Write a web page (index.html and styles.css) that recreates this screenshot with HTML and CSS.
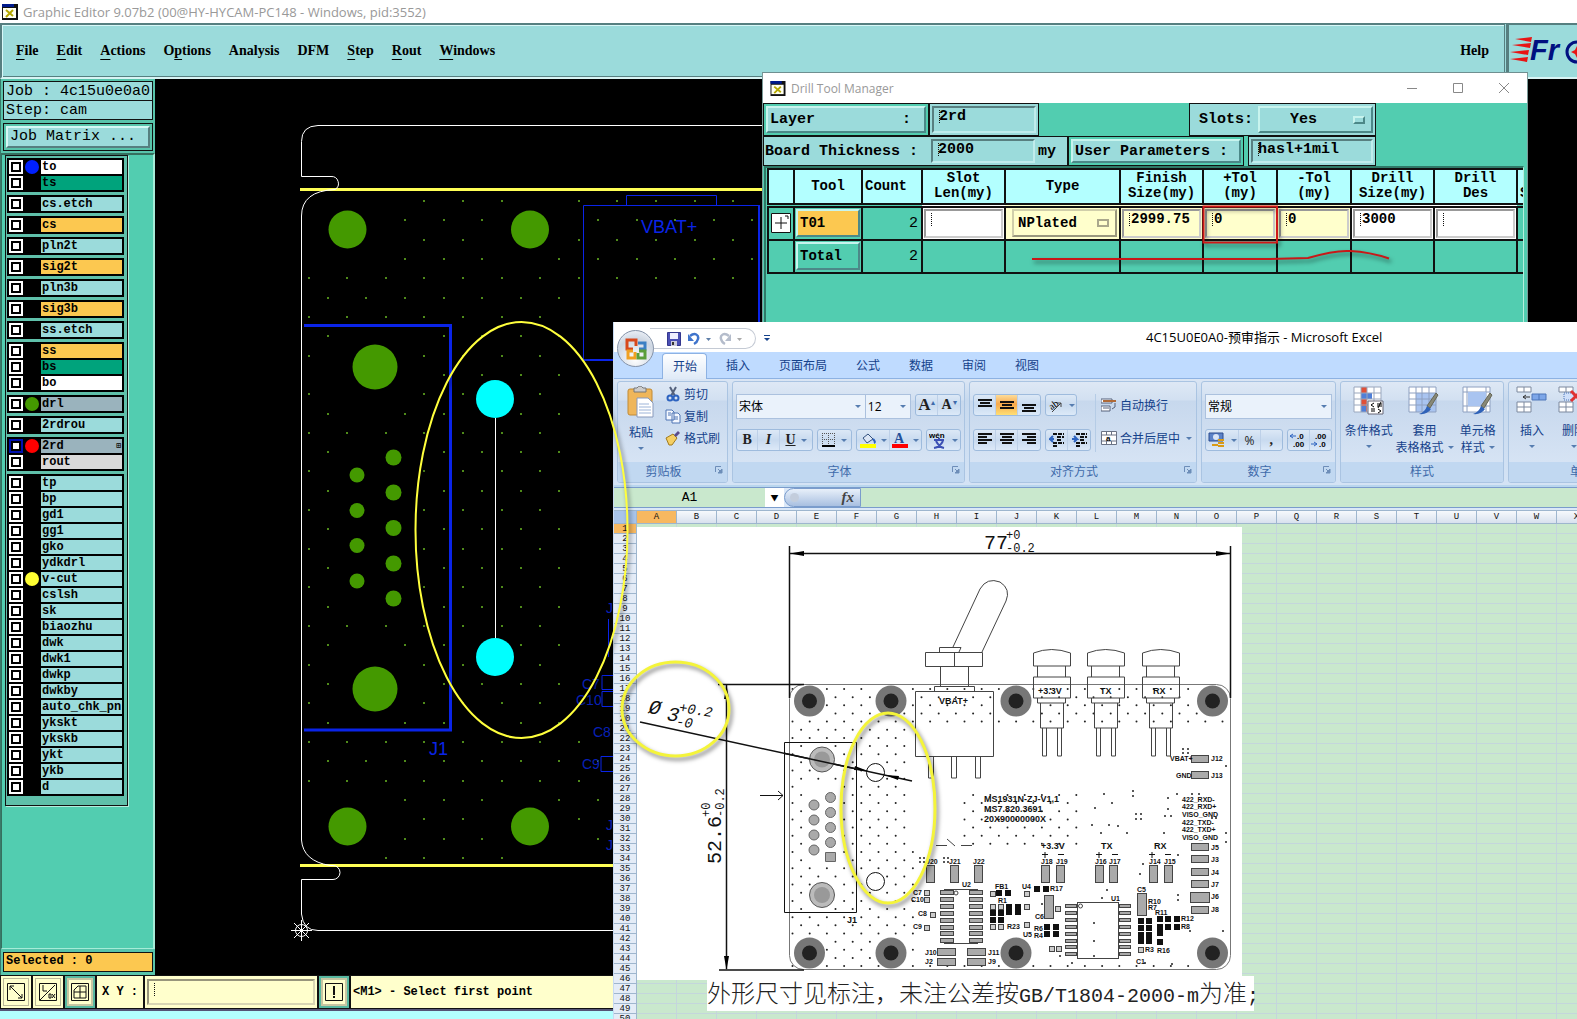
FILE: index.html
```html
<!DOCTYPE html>
<html lang="zh-CN">
<head>
<meta charset="utf-8">
<title>Graphic Editor</title>
<link rel="stylesheet" href="styles.css">
</head>
<body>
<svg class="defs" width="0" height="0" aria-hidden="true">
  <symbol id="x-app" viewBox="0 0 16 16"><path d="M0 0h16v16H0z" fill="#111"/><path d="M1 4h13v10H1z" fill="#fffff0"/><path d="M0 0h12v3H0z" fill="#001a8c"/><path d="M4 6l7 6M11 6l-7 7" stroke="#b5a800" stroke-width="2"/></symbol>
  <symbol id="launcher" viewBox="0 0 8 8"><path d="M.5 6V.5H6" fill="none" stroke="#6d8db8"/><path d="M3 3l2 2M7 3v4H3z" stroke="#6d8db8" fill="#6d8db8"/></symbol>
</svg>

<div class="app">
  <header class="titlebar"><svg class="appicon"><use href="#x-app"/></svg><span>Graphic Editor 9.07b2 (00@HY-HYCAM-PC148 - Windows, pid:3552)</span></header>
  <div class="menurow">
    <nav class="menubar">
      <button><u>F</u>ile</button><button><u>E</u>dit</button><button><u>A</u>ctions</button><button>O<u>p</u>tions</button><button>Analysis</button><button>DFM</button><button><u>S</u>tep</button><button><u>R</u>out</button><button><u>W</u>indows</button>
      <button class="help">Help</button>
    </nav>
    <div class="logo">
      <svg width="80" height="48"><g fill="#e81414"><path d="M6 14l17-2-1 5zM3 20l19-2-1 5zM1 27l19-2-1 5zM1 34l18-2-1 5z"/></g><text x="21" y="35" class="logotext">Fr</text><circle cx="68" cy="27" r="10" fill="none" stroke="#001080" stroke-width="3"/><path d="M68 21l2 4 4 2-4 2-2 4-2-4-4-2 4-2z" fill="#e81414"/></svg>
    </div>
  </div>
  <main class="work">
    <aside class="side">
      <div class="jobbox">Job : 4c15u0e0a0</div>
      <div class="jobbox">Step: cam</div>
      <div class="matrix"><button>Job Matrix ...</button></div>
      <div class="layerpane"><div class="layers" id="layers"></div></div>
      <output class="selected">Selected : 0</output>
    </aside>
    <svg class="canvas" role="img" aria-label="PCB view"><g transform="translate(-155 -79)">
      <g id="vias" fill="#4f8a1a"></g>
      <g fill="none" stroke="#0a24e8"><path stroke-width="3" d="M304 325.5H450.5V730H304"/><path d="M583.5 360V205.5H759M626.5 205V195.5H716.5V205"/><path stroke-width="2" d="M759 205V360H583"/><path d="M614 675.500H602V689.500H614M614 691.500H602V706.500H614M614 756.500H601V771.500H614M608.500 619v38"/></g>
      <g fill="#0a24e8" class="silk"><text x="641" y="233">VBAT+</text><text x="429" y="755">J1</text></g>
      <g fill="#0820b8" class="silk small"><text x="582" y="689">C7</text><text x="576" y="705">C10</text><text x="593" y="737">C8</text><text x="582" y="769">C9</text><text x="606" y="613">J</text><text x="606" y="830">J</text><text x="606" y="850">J</text></g>
      <g fill="#449900"><circle cx="347.500" cy="229.500" r="19"/><circle cx="530" cy="229.500" r="19"/><circle cx="375" cy="367" r="22.500"/><circle cx="375" cy="689" r="22.500"/><circle cx="347.500" cy="826.500" r="19"/><circle cx="530" cy="826.500" r="19"/>
      <circle cx="393.500" cy="457.500" r="8"/><circle cx="393.500" cy="492.500" r="8"/><circle cx="393.500" cy="528" r="8"/><circle cx="393.500" cy="563.500" r="8"/><circle cx="393.500" cy="598.500" r="8"/><circle cx="357" cy="475" r="7.500"/><circle cx="357" cy="510.500" r="7.500"/><circle cx="357" cy="545.500" r="7.500"/><circle cx="357" cy="581" r="7.500"/></g>
      <path d="M300 189.500H770M300 865.500H620" stroke="#ffff55" stroke-width="3"/>
      <path fill="none" stroke="#fff" d="M780 125.500H318Q301.500 126 301.500 141.500V176.500H331a7 7 0 0 1 4 13Q301.500 191 301.500 216V840Q303 861 330 865.500H333a7 7 0 0 1 0 14H301.500V914Q303 930.500 318 930.500H620"/>
      <g fill="none" stroke="#fff"><circle cx="301.500" cy="930.500" r="6"/><path d="M291 930.500h21M301.500 920v21M294 923l15 15M309 923l-15 15"/></g>
      <path d="M495.500 418V640" stroke="#fff"/><g fill="#0ff"><circle cx="495" cy="399" r="19"/><circle cx="495" cy="657" r="19"/></g>
    </g></svg>
  </main>
  <footer class="cmdbar">
    <button class="tool" aria-label="Zoom"><svg width="20" height="20"><path class="ln" d="M1.500 1.500h17v17h-17zM4 4l12 12M4 8V4h4M12 16h4v-4"/></svg></button>
    <button class="tool" aria-label="Angle"><svg width="20" height="20"><path class="ln" d="M1.500 1.500h17v17h-17zM2 18L17 3M5 3v6h4M11 12v4h2v-4zM14 12l3 4M17 12l-3 4"/></svg></button>
    <button class="tool on" aria-label="Grid"><svg width="20" height="20"><path class="ln" d="M1.500 1.500h17v17h-17zM4 8l4-4h8v12H4zM10 4v12M4 10h12"/></svg></button>
    <label class="xy" for="xy">X Y :</label>
    <span class="xyfield"><input id="xy" type="text" class="caret"></span>
    <button class="tool on" aria-label="Info"><svg width="20" height="20"><path class="ln strong" d="M1.500 1.500h17v17h-17z"/><path class="ln2" d="M10 4v9M10 14v2"/></svg></button>
    <output class="message">&lt;M1&gt; - Select first point</output>
  </footer>
  <div class="status"></div>
</div>

<section class="drill" aria-label="Drill Tool Manager">
  <header class="drilltitle"><svg class="appicon"><use href="#x-app"/></svg><span>Drill Tool Manager</span>
    <button class="push" aria-label="Minimize"><svg width="12" height="12"><path d="M1 6.500h10"/></svg></button><button aria-label="Maximize"><svg width="12" height="12"><path d="M1.500 1.500h9v9h-9z"/></svg></button><button aria-label="Close"><svg width="12" height="12"><path d="M1 1l10 10M11 1L1 11"/></svg></button></header>
  <div class="prow">
    <div class="cell"><button class="raised layerbtn"><span>Layer</span><span>:</span></button></div>
    <div class="cell blue"><input class="sunk caret" value="2rd" aria-label="Layer"></div>
    <div class="cell blue slots"><label for="slots">Slots:</label><span class="pick raised"><select id="slots"><option>Yes</option></select></span></div>
  </div>
  <div class="prow low">
    <div class="cell blue thick"><label for="bt">Board Thickness :</label><input id="bt" class="sunk caret" value="2000"><span>my</span></div>
    <div class="cell"><button class="raised">User Parameters :</button></div>
    <div class="cell blue user"><input class="sunk caret" value="hasl+1mil" aria-label="User Parameters"></div>
  </div>
  <div class="tablebox">
  <table>
    <colgroup><col class="w26"><col class="w68"><col class="w60"><col class="w83"><col class="w115"><col class="w83"><col class="w74"><col class="w74"><col class="w83"><col class="w83"><col class="w26"></colgroup>
    <thead><tr><th></th><th>Tool</th><th class="left">Count</th><th>Slot<br>Len(my)</th><th>Type</th><th>Finish<br>Size(my)</th><th>+Tol<br>(my)</th><th>-Tol<br>(my)</th><th>Drill<br>Size(my)</th><th>Drill<br>Des</th><th class="left"><br>S</th></tr></thead>
    <tbody>
    <tr><td><button class="plus" aria-label="Expand"><svg width="20" height="20"><path class="ln" d="M.5 .5h19v19H.5zM4 10h12M10 4v12M14 3h3v3"/></svg></button></td><td><button class="raised gold">T01</button></td><td class="num">2</td><td class="white"><input class="sunk caret" aria-label="Slot length"></td><td class="cream"><span class="pick flat"><select aria-label="Type"><option>NPlated</option></select></span></td><td class="cream"><input class="sunk caret" value="2999.75" aria-label="Finish size"></td><td class="cream"><input class="sunk caret" value="0" aria-label="+Tol"></td><td class="cream"><input class="sunk caret" value="0" aria-label="-Tol"></td><td class="white"><input class="sunk caret" value="3000" aria-label="Drill size"></td><td class="white"><input class="sunk caret" aria-label="Drill des"></td><td></td></tr>
    <tr><td></td><td><button class="raised teal">Total</button></td><td class="num">2</td><td></td><td></td><td></td><td></td><td></td><td></td><td></td><td></td></tr>
    </tbody>
  </table></div>
</section>

<section class="excel" aria-label="Microsoft Excel">
  <header class="xtitle">
    <div class="qat">
      <button aria-label="保存"><svg width="14" height="14"><path d="M.5 .5h13v13H.5z" fill="#4a4fb4" stroke="#34378e"/><path d="M3 1h8v6H3z" fill="#eef"/><path d="M4 9h6v5H4z" fill="#ccd"/><path d="M5 10h2v3H5z" fill="#333"/></svg></button>
      <button aria-label="撤消"><svg width="24" height="14"><path d="M2 4c5-4 9-1 8 3-.5 2-2 4-4 5" fill="none" stroke="#3f74cc" stroke-width="2.500"/><path d="M0 2v7h6z" fill="#3f74cc"/><path d="M18 6h5l-2.500 3z" fill="#5e7ea8"/></svg></button>
      <button aria-label="恢复"><svg width="24" height="14"><path d="M10 4C5 0 1 3 2 7c.5 2 2 4 4 5" fill="none" stroke="#b4bccb" stroke-width="2.500"/><path d="M12 2v7H6z" fill="#b4bccb"/><path d="M18 6h5l-2.500 3z" fill="#aaa"/></svg></button>
    </div>
    <svg class="more" width="6" height="8"><path d="M0 1.500h6" stroke="#15428b"/><path d="M0 4h6L3 7z" fill="#15428b"/></svg>
    <h1>4C15U0E0A0-预审指示 - Microsoft Excel</h1>
  </header>
  <nav class="tabs"><button class="active">开始</button><button>插入</button><button>页面布局</button><button>公式</button><button>数据</button><button>审阅</button><button>视图</button></nav>
  <button class="orb" aria-label="Office"><svg width="24" height="24" fill="none" stroke-width="3"><path d="M12 9V3H3v9h6" stroke="#d8481c"/><path d="M14 6h7v6h-6" stroke="#3a7fc4"/><path d="M9 14H4v7h7v-6" stroke="#f0a020"/><path d="M15 14h6v7h-7v-5" stroke="#5a9e3a"/></svg></button>
  <div class="ribbon">
    <section class="group g-clip"><div class="gbody">
      <button class="big"><svg width="30" height="32"><rect x="2" y="3" width="24" height="26" rx="2" fill="#efb65a" stroke="#c18a35"/><path d="M8 2h3q3-4 6 0h3v4H8z" fill="#ccc" stroke="#777"/><path d="M11 12h11l5 5v14H11z" fill="#fff" stroke="#8899bb"/><path d="M13 18h10M13 21h12M13 24h12M13 27h12" stroke="#9db4d8"/></svg><span>粘贴</span><i class="dd"></i></button>
      <div class="stack">
        <button><svg width="16" height="16"><path d="M5 1l5 9M11 1L6 10" stroke="#54617c" stroke-width="2"/><circle cx="5" cy="12" r="2.500" fill="none" stroke="#2d63c0" stroke-width="2"/><circle cx="11" cy="12" r="2.500" fill="none" stroke="#2d63c0" stroke-width="2"/></svg>剪切</button>
        <button><svg width="16" height="16"><path d="M1 2h6l2 2v8H1zM7 5h6l2 2v8H7z" fill="#f4f8ff" stroke="#4e74b4"/><path d="M3 5h3M3 7h3M9 9h4M9 11h4" stroke="#4e74b4"/></svg>复制</button>
        <button><svg width="16" height="16"><path d="M1 8l7-4 4 4-5 7H4z" fill="#f5cf63" stroke="#a17a1c"/><path d="M9 5l4-4 2 2-4 4z" fill="#5a4c8c"/></svg>格式刷</button>
      </div></div><footer>剪贴板<svg class="la"><use href="#launcher"/></svg></footer></section>
    <section class="group g-font"><div class="gbody col">
      <div class="line"><span class="combo fname"><select aria-label="字体"><option>宋体</option></select></span><span class="combo fsize"><select aria-label="字号"><option>12</option></select></span><span class="bar m4"><button class="w22"><b class="t18">A</b><sup>▴</sup></button><button class="w22"><b class="t14">A</b><sup>▾</sup></button></span></div>
      <div class="line"><span class="bar"><button class="w22"><b>B</b></button><button class="w22"><b><em>I</em></b></button><button class="w34"><b><u>U</u></b><i class="dd"></i></button></span><span class="bar"><button class="w34"><svg width="14" height="14"><path d="M.5 0v13M6.500 0v13M12.500 0v13M0 .5h13M0 6.500h13" stroke="#555" stroke-dasharray="1 1"/><path d="M0 13h13" stroke="#000" stroke-width="2"/></svg><i class="dd"></i></button></span><span class="bar"><button class="w34"><svg width="16" height="16"><path d="M3 6l5-4 5 5-6 4z" fill="#dce6f5" stroke="#33517e"/><path d="M13 7q3 3 1 4" stroke="#2b62c0" stroke-width="2" fill="none"/><path d="M0 12h16v4H0z" fill="#ff0"/></svg><i class="dd"></i></button><button class="w32"><svg width="16" height="16"><text x="2" y="11" class="fa">A</text><path d="M0 12h16v4H0z" fill="red"/></svg><i class="dd"></i></button></span><span class="bar"><button class="w34"><svg width="18" height="18"><text x="0" y="7" class="wen">wén</text><path d="M5 9h10M10 7v2M7 10q3 6 8 7M14 10q-3 6-9 7" stroke="#3c50b4" stroke-width="2" fill="none"/></svg><i class="dd"></i></button></span></div>
      </div><footer>字体<svg class="la"><use href="#launcher"/></svg></footer></section>
    <section class="group g-align"><div class="gbody"><div class="gcol">
      <div class="line"><span class="bar"><button class="w22"><svg width="14" height="14"><path class="ln2" d="M0 2h14M2 5h10M0 8h14"/></svg></button><button class="w22 hot"><svg width="14" height="14"><path class="ln2" d="M0 4h14M2 7h10M0 10h14"/></svg></button><button class="w22"><svg width="14" height="14"><path class="ln2" d="M0 7h14M2 10h10M0 13h14"/></svg></button></span><span class="bar"><button class="w30"><svg width="17" height="17"><text x="2" y="11" class="ab" transform="rotate(-35 7 8)">ab</text><path d="M5 15L14 6M14 6v4M14 6h-4" stroke="#444"/></svg><i class="dd"></i></button></span></div>
      <div class="line"><span class="bar"><button class="w22"><svg width="14" height="14"><path class="ln2" d="M0 1h14M0 4h9M0 7h14M0 10h9"/></svg></button><button class="w22"><svg width="14" height="14"><path class="ln2" d="M0 1h14M2 4h10M0 7h14M2 10h10"/></svg></button><button class="w22"><svg width="14" height="14"><path class="ln2" d="M0 1h14M5 4h9M0 7h14M5 10h9"/></svg></button></span><span class="bar"><button class="w22"><svg width="15" height="14"><path class="ln2" d="M4 1h11M8 4h7M8 7h5M4 10h11M4 13h4" stroke-dasharray="4 1"/><path d="M5 6H1l3-3M1 6l3 3" stroke="#2d63c0" fill="none" stroke-width="2"/></svg></button><button class="w22"><svg width="15" height="14"><path class="ln2" d="M4 1h11M8 4h7M8 7h5M4 10h11M4 13h4" stroke-dasharray="4 1"/><path d="M0 6h5L2 3M5 6L2 9" stroke="#2d63c0" fill="none" stroke-width="2"/></svg></button></span></div></div>
      <div class="gcol wrapcol"><button><svg width="16" height="16"><path d="M0 2h11v4H0zM0 9h9v5H0z" fill="#fff" stroke="#55617a"/><path d="M2 4h13" stroke="#b06a36" stroke-width="2"/><path d="M2 11h6M14 6v4l-3 2" stroke="#55617a" fill="none"/></svg>自动换行</button><button><svg width="16" height="16"><path d="M.5 1.500h15v13H.5zM0 5h16M0 11h16M5.500 1v4M10.500 1v4M5.500 11v3M10.500 11v3" fill="#fff" stroke="#6a7385"/><text x="5" y="11" class="wen">a</text></svg>合并后居中<i class="dd"></i></button></div>
      </div><footer>对齐方式<svg class="la"><use href="#launcher"/></svg></footer></section>
    <section class="group g-num"><div class="gbody col">
      <div class="line"><span class="combo wide"><select aria-label="数字格式"><option>常规</option></select></span></div>
      <div class="line"><span class="bar"><button class="w34"><svg width="18" height="16"><path d="M1 1h14v8H1z" fill="#5b82c8" stroke="#2c4d8f"/><circle cx="8" cy="5" r="3" fill="#d8e4f8"/><path d="M10 8h6M10 11h6M4 13h6M10 14h6" stroke="#d99b17" stroke-width="2"/></svg><i class="dd"></i></button><button class="w22">%</button><button class="w22"><b>,</b></button></span><span class="bar"><button class="w22"><svg width="18" height="16"><path d="M7 4H1l3-2M1 4l3 2" stroke="#2d63c0" fill="none"/><text x="8" y="7" class="dec">.0</text><text x="4" y="15" class="dec">.00</text></svg></button><button class="w22"><svg width="18" height="16"><text x="4" y="7" class="dec">.00</text><path d="M0 12h6l-3-2M6 12l-3 2" stroke="#2d63c0" fill="none"/><text x="8" y="15" class="dec">.0</text></svg></button></span></div>
      </div><footer>数字<svg class="la"><use href="#launcher"/></svg></footer></section>
    <section class="group g-style"><div class="gbody">
      <button class="big wide1"><svg width="32" height="30"><path d="M1 1h27v25H1z" fill="#fff"/><path d="M8 1h6v25H8z" fill="#e05038"/><path d="M8 7h11v6H8zM8 20h5v6H8z" fill="#4f7fd8"/><path d="M1 1h27v25H1zM1 7h27M1 13h27M1 19h27M8 1v25M14 1v25M21 1v25" fill="none" stroke="#9aa7bd"/><path d="M15 15h15v13H15z" fill="#fff" stroke="#667"/><path d="M21 17l-3 2 3 2M18 23h4M18 25h4M24 18h5M24 20h5M28 16l-3 6M25 23l3 2-3 2" stroke="#000" fill="none"/></svg><span>条件格式</span><i class="dd"></i></button>
      <button class="big wide1"><svg width="32" height="30"><path d="M1 1h27v25H1z" fill="#fff"/><path d="M8 7h20v19H8z" fill="#a9c4f0"/><path d="M1 1h27v25H1zM1 7h27M1 13h27M1 19h27M8 1v25M14 1v25M21 1v25" fill="none" stroke="#8ea0c0"/><path d="M19 20L28 7l2 2-8 13z" fill="#887" stroke="#665"/><path d="M11 28q6-2 8-8l4 3q-4 6-12 5z" fill="#2f62b8"/></svg><span>套用</span><span>表格格式<i class="dd"></i></span></button>
      <button class="big"><svg width="32" height="30"><path d="M1 1h27v25H1z" fill="#fff" stroke="#8ea0c0"/><path d="M1 6h27M1 20h27M5 1v25M24 1v25" stroke="#8ea0c0"/><path d="M6 6h18v14H6z" fill="#a9c4f0"/><path d="M19 20L28 7l2 2-8 13z" fill="#887" stroke="#665"/><path d="M11 28q6-2 8-8l4 3q-4 6-12 5z" fill="#2f62b8"/></svg><span>单元格</span><span>样式<i class="dd"></i></span></button>
      </div><footer class="center">样式</footer></section>
    <section class="group g-cell"><div class="gbody">
      <button class="big"><svg width="32" height="30"><path d="M1 1h14v5H1zM1 16h14v10H1zM8 1v5M8 16v10M1 21h14" fill="#fff" stroke="#7d899e"/><path d="M16 8h14v6H16zM23 8v6" fill="#7da6e8" stroke="#4d74b8"/><path d="M14 11H7l3-2M7 11l3 2" stroke="#333" fill="none"/></svg><span>插入</span><i class="dd"></i></button>
      <button class="big"><svg width="32" height="30"><path d="M1 1h14v5H1zM1 16h14v10H1zM8 1v5M8 16v10M1 21h14" fill="#fff" stroke="#7d899e"/><path d="M6 7h10v7H6z" fill="#cfe0fa" stroke="#4d74b8" stroke-dasharray="1 1"/><path d="M13 5l10 10M23 5L13 15" stroke="#e03030" stroke-width="3"/></svg><span>删除</span><i class="dd"></i></button>
      </div><footer class="center">单元格</footer></section>
  </div>
  <div class="fbar"><input class="namebox" value="A1" aria-label="名称框"><button class="nd" aria-label="名称列表">▼</button><span class="fx"><i></i><em>fx</em></span><input class="formula" aria-label="编辑栏"></div>
  <div class="colheads" id="cols"><span class="corner"></span></div>
  <div class="sheet">
    <div class="rowheads" id="rows"></div>
    <div class="cells">
      <svg class="picture" width="605" height="453" role="img" aria-label="外形尺寸图"><g transform="translate(-637 -526)">
        <g id="pads" fill="#222"></g>
        <g fill="none" stroke="#777"><rect x="789.500" y="683.500" width="441" height="285" rx="14"/></g>
        <g fill="none" stroke="#111" stroke-width="1"><path d="M789.500 545V697M1230.500 545V697M789 552.500H1230M726.500 684V968M718 683.500H804M719 969H804" stroke-width="1.500"/><path d="M784.500 741.500h72v170h-72z"/><path d="M640 721L912 780" stroke-width="1.500"/><path d="M760 794.500h23M778 790l5 4.500-5 4.500"/><circle cx="875.500" cy="771.500" r="9"/><circle cx="875.500" cy="880.500" r="9"/></g>
        <path d="M790 552.500l14-2.500v5zM1230 552.500l-14-2.500v5zM726.500 684l-2.500 14h5zM726.500 969l-2.500-14h5zM868 770l-14-1 1-4zM885 774l14 1-1 4z"/>
        <g id="holes"></g>
        <g fill="#bbb" stroke="#555"><circle cx="822" cy="758.500" r="12.500"/><circle cx="822" cy="894" r="12.500"/></g>
        <g fill="#999"><circle cx="822" cy="758.500" r="8"/><circle cx="822" cy="894" r="8"/></g>
        <g fill="#aaa" stroke="#666"><circle cx="830.500" cy="796.500" r="5"/><circle cx="830.500" cy="811.500" r="5"/><circle cx="830.500" cy="826.500" r="5"/><circle cx="830.500" cy="841.500" r="5"/><path d="M825.500 851.500h10v9h-10z"/><circle cx="814" cy="804" r="5"/><circle cx="814" cy="819" r="5"/><circle cx="814" cy="834" r="5"/><circle cx="814" cy="849" r="5"/></g>
        <path d="M784 752.300L858 768.300" stroke="#111" stroke-width="1.500"/>
        <g fill="none" stroke="#444"><path d="M915.500 690.500h78v65h-78zM934.500 690V685.500h40V690M940.500 685V665M968.500 685V665M925.500 651.500h57v14h-57zM954.500 651v14M939.500 651V646.500H961L959 651M953 646L980 588Q987 576 1000 581Q1011 588 1006 600L982 651"/><path d="M928.500 756v21h5v-21M951.500 756v21h5v-21M975.500 756v21h5v-21"/></g>
        <g id="leds" fill="none" stroke="#444"></g>
        <g id="parts"></g>
        <g class="pcbtext"><text x="939" y="703">VBAT+</text><text x="1038" y="693">+3.3V</text><text x="1100" y="693">TX</text><text x="1153" y="693">RX</text><text x="1041" y="848">+3.3V</text><text x="1101" y="848">TX</text><text x="1154" y="848">RX</text><text x="984" y="801">MS1931N-ZJ-V1,1</text><text x="984" y="811">MS7.820.3691</text><text x="984" y="821">20X90000000X</text><text x="847" y="922">J1</text></g>
        <g class="pcbtext tiny"><text x="1170" y="760">VBAT+</text><text x="1211" y="760">J12</text><text x="1176" y="777">GND</text><text x="1211" y="777">J13</text><text x="1182" y="801">422_RXD-</text><text x="1182" y="808">422_RXD+</text><text x="1182" y="816">VISO_GND</text><text x="1182" y="824">422_TXD-</text><text x="1182" y="831">422_TXD+</text><text x="1182" y="839">VISO_GND</text><text x="1211" y="849">J5</text><text x="1211" y="861">J3</text><text x="1211" y="874">J4</text><text x="1211" y="886">J7</text><text x="1211" y="898">J6</text><text x="1211" y="911">J8</text>
          <text x="926" y="863">J20</text><text x="949" y="863">J21</text><text x="973" y="863">J22</text><text x="1041" y="863">J18</text><text x="1056" y="863">J19</text><text x="1095" y="863">J16</text><text x="1109" y="863">J17</text><text x="1149" y="863">J14</text><text x="1164" y="863">J15</text><text x="962" y="886">U2</text><text x="1111" y="900">U1</text><text x="913" y="894">C7</text><text x="911" y="901">C10</text><text x="918" y="915">C8</text><text x="913" y="928">C9</text><text x="925" y="954">J10</text><text x="925" y="963">J2</text><text x="988" y="954">J11</text><text x="988" y="963">J9</text><text x="995" y="888">FB1</text><text x="1022" y="888">U4</text><text x="1050" y="890">R17</text><text x="1023" y="936">U5</text><text x="1035" y="918">C6</text><text x="1034" y="930">R6</text><text x="1034" y="937">R4</text><text x="1137" y="891">C5</text><text x="1148" y="903">R10</text><text x="1148" y="909">R7</text><text x="1155" y="914">R11</text><text x="1181" y="920">R12</text><text x="1181" y="928">R8</text><text x="1145" y="951">R3</text><text x="1157" y="952">R16</text><text x="1136" y="963">C1</text><text x="998" y="902">R1</text><text x="1007" y="928">R23</text></g>
        <g class="dim"><text x="984" y="548" class="dl">77</text><text x="1006" y="538">+0</text><text x="1006" y="551">-0.2</text></g>
        <g class="dim" transform="rotate(-90 721 863)"><text x="721" y="863" class="dl">52.6</text><text x="768" y="852">+0</text><text x="768" y="866">-0.2</text></g>
        <g class="dim it" transform="rotate(9 648 712)"><text x="648" y="712" class="dl">Ø</text><text x="667" y="716" class="dl">3</text><text x="678" y="706" class="dm">+0.2</text><text x="677" y="720" class="dm">-0</text></g>
      </g></svg>
      <p class="caption">外形尺寸见标注，未注公差按<span>GB/T1804-2000-m</span>为准<span>;</span></p>
    </div>
  </div>
</section>

<svg class="notes" aria-hidden="true"><g fill="none"><ellipse cx="521.500" cy="530" rx="106" ry="208" stroke="#ffff3c" stroke-width="2"/><ellipse cx="675.500" cy="709" rx="53.500" ry="47" stroke="#f4f43a" stroke-width="3"/><ellipse cx="888" cy="808" rx="47" ry="95" stroke="#f4f43a" stroke-width="3"/><path d="M1203.500 206.500h73.500v36h-73.500z" stroke="#d01818" stroke-width="2"/><path d="M1032 259H1270L1308 258Q1335 250 1350 251Q1370 252 1389 258.500" stroke="#c81818" stroke-width="2"/></g></svg>
<script src="app.js"></script>
</body>
</html>
```

FILE: styles.css
```css
*, *::after { box-sizing: border-box; }
body { margin: 0; height: 100vh; overflow: hidden; position: relative; background: #000; color: #000; font-family: "Open Sans", "Noto Sans CJK SC", sans-serif; font-size: 12px; }
button, input, select { font: inherit; color: inherit; margin: 0; padding: 0; border: 0; border-radius: 0; background: none; min-width: 0; }
.defs { position: absolute; }
.ln { fill: none; stroke: #111; }
.ln2 { fill: none; stroke: #111; stroke-width: 2; shape-rendering: crispEdges; }

/* CAM editor */
.app { height: 100vh; display: flex; flex-direction: column; }
.titlebar { height: 23px; display: flex; align-items: center; gap: 5px; padding-left: 2px; background: #fff; color: #999; font-size: 13px; }
.appicon { width: 16px; height: 16px; }
.menurow { display: flex; height: 56px; background: #9bdbdb; }
.menubar { flex: 1; display: flex; align-items: center; gap: 18px; padding: 0 15px 0 14px; border: 2px solid; border-color: #567f80 #567f80 #d8f4f4 #567f80; border-right: 3px double #567f80; box-shadow: inset 1px 1px #d8f8f8, inset 0 -1px #567f80; font: bold 14px "Liberation Serif", serif; }
.menubar u { text-underline-offset: 4px; text-decoration-thickness: 1px; }
.help { margin-left: auto; }
.logo { width: 70px; overflow: hidden; border: 2px solid #567f80; border-bottom-color: #d8f4f4; border-right: 0; }
.logotext { font: italic bold 29px "Liberation Sans", sans-serif; fill: #001080; }
.work { flex: 1; min-height: 0; display: flex; background: #000; }
.side { width: 155px; flex: none; display: flex; flex-direction: column; padding: 2px 2px 1px 2px; background: #58c4ab; font: 15px "Liberation Mono", monospace; border-left: 1px solid #3a7a6a; }
.jobbox { height: 20px; line-height: 19px; padding-left: 2px; border: 1px solid #111; background: #9bdbdb; margin-bottom: -1px; white-space: nowrap; overflow: hidden; }
.matrix { border: 1px solid #111; padding: 2px; margin: 4px 0 2px; }
.matrix button { display: block; width: 100%; height: 22px; line-height: 18px; text-align: left; padding-left: 2px; background: #9bdbdb; border: 2px solid; border-color: #d5f8f5 #567f80 #567f80 #d5f8f5; }
.layerpane { flex: 1; min-height: 0; margin: 0 -2px 3px -2px; padding: 0 0 0 3px; border-top: 2px solid #35705f; border-left: 1px solid #35705f; border-right: 2px solid #a5ecd8; border-bottom: 1px solid #a5ecd8; background: #52cdb0; }
.layers { width: 123px; padding: 2px 2px 9px 1px; border: 1px solid #111; background: #5fc0aa; box-shadow: 1px 1px #b5eedd; display: flex; flex-direction: column; gap: 3px; }
.lgroup { background: #000; padding: 2px; display: grid; gap: 2px; width: 117px; }
.layer { display: grid; grid-template-columns: 14px 16px 81px; gap: 1px; height: 14px; font: bold 12px/14px "Liberation Mono", monospace; }
.layer input { appearance: none; width: 14px; height: 14px; border: 2px solid #fff; background: #fff; box-shadow: inset 0 0 0 2px #000; }
.layer input:checked { border-color: #0010b0; }
.layer i { width: 14px; height: 14px; border-radius: 50%; margin-left: 1px; }
.layer span { padding-left: 1px; overflow: hidden; white-space: nowrap; background: #9bdbdb; }
.layer .c-white { background: #fff; }
.layer .c-green { background: #00a37c; }
.layer .c-gold { background: #fcc850; }
.layer .c-grey { background: #9ab3bd; }
.layer .c-light { background: #d9d9d9; }
.layer small { float: right; font-size: 8px; margin-right: 1px; }
.selected { height: 20px; line-height: 17px; padding-left: 2px; border: 1px solid #111; background: #fcc850; font-size: 12px; font-weight: bold; margin-bottom: 2px; }
.canvas { flex: 1; height: 100%; min-width: 0; }
.silk { font: 18px "Liberation Sans", sans-serif; }
.silk.small { font-size: 14px; }
.cmdbar { height: 34px; display: flex; gap: 2px; padding: 1px 0 1px 1px; background: #111; font: bold 12px "Liberation Mono", monospace; }
.tool { width: 30px; flex: none; display: grid; place-items: center; background: #ffffcc; border: 2px solid #ffffcc; box-shadow: inset 0 0 0 1px #bbb89a; }
.tool.on { border-color: #58b8a0; box-shadow: inset 0 0 0 2px #c8c6a2; }
.xy { width: 46px; display: grid; place-items: center; background: #ffffcc; }
.xyfield { width: 172px; padding: 3px 2px; background: #ffffcc; }
.xyfield input { width: 100%; height: 100%; border: 2px solid; border-color: #98967c #d8d6b4 #d8d6b4 #98967c; }
.message { flex: 1; display: flex; align-items: center; padding-left: 2px; background: #ffffcc; }
.status { height: 10px; border-top: 2px solid #557; background: #b3ffff; }
.caret { background-image: repeating-linear-gradient(#111 0 1px, transparent 1px 2px); background-size: 1px 14px; background-position: 5px 2px; background-repeat: no-repeat; }

/* drill tool manager */
.drill { position: absolute; left: 762px; top: 72px; width: 766px; height: 300px; background: #52cdb0; border: 1px solid #7a9a98; border-top-color: #6f8f90; font: bold 15px "Liberation Mono", monospace; }
.drilltitle { height: 30px; display: flex; align-items: center; padding-left: 7px; background: #fff; color: #999; font: 12px "Open Sans", sans-serif; }
.drilltitle span { margin-left: 5px; }
.drilltitle button { width: 46px; height: 30px; display: grid; place-items: center; }
.drilltitle .push { margin-left: auto; }
.drilltitle path { fill: none; stroke: #888; }
.drill .appicon { height: 15px; }
.prow { display: flex; height: 33px; align-items: stretch; }
.prow.low { height: 30px; }
.cell { border: 1px solid #111; padding: 2px; display: flex; align-items: center; }
.cell.blue { background: #9bdbdb; }
.raised { background: #9bdbdb; border: 2px solid; border-color: #c8f4ee #4c8888 #4c8888 #c8f4ee; height: 100%; text-align: left; padding: 0 2px; }
.layerbtn { width: 160px; display: flex; justify-content: space-between; align-items: center; padding-right: 13px; }
.sunk { border: 2px solid; border-color: #587f80 #c0ecec #c0ecec #587f80; width: 104px; height: 100%; padding: 0 0 7px 5px; }
.low .sunk { padding-bottom: 3px; }
.slots { margin-left: 150px; width: 187px; justify-content: space-between; padding-left: 9px; }
.pick { position: relative; display: block; width: 115px; }
.pick select { appearance: none; width: 100%; height: 100%; padding-left: 28px; }
.pick::after { content: ""; position: absolute; right: 6px; top: 50%; margin-top: -4px; width: 12px; height: 8px; border: 2px solid; border-color: #c8f4ee #4c8888 #4c8888 #c8f4ee; }
.thick { width: 305px; white-space: nowrap; gap: 3px; padding-left: 1px; }
.thick label { width: 163px; }
.low .raised { width: 170px; white-space: nowrap; }
.user { width: 128px; margin-left: 4px; }
.user .sunk { width: 100%; }
.tablebox { margin: 0 3px 0 1px; padding-left: 1px; height: 200px; overflow: hidden; border: solid #2f7a68; border-width: 2px 0 0 2px; border-right: 1px solid #b5eedd; }
table { border-collapse: collapse; table-layout: fixed; width: 775px; }
.w26 { width: 26px; } .w68 { width: 68px; } .w60 { width: 60px; } .w83 { width: 83px; } .w115 { width: 115px; } .w74 { width: 74px; }
th { height: 36px; padding: 0; background: #b3ffff; border: 2px solid #111; border-bottom: 5px double #111; line-height: 15px; font-weight: bold; font-size: 14px; }
.left { text-align: left; padding-left: 2px; }
td { height: 33px; padding: 1px; border: 2px solid #111; }
td .sunk { width: 100%; height: 29px; display: block; font-size: 14px; padding: 0 0 9px 7px; border-color: #999 #ccc #ccc #999; }
td .raised { display: block; width: 100%; height: 28px; font-size: 14px; }
.gold { background: #fcc850; }
.teal { background: #52cdb0; }
.white { background: #fff; }
.cream { background: #ffffcc; }
.num { text-align: right; padding-right: 3px; font-weight: normal; }
.plus { display: block; width: 20px; height: 20px; background: #fff; margin-left: 1px; }
.flat { width: 105px; height: 28px; margin-left: 5px; border: 2px solid; border-color: #d0ceaa #9a987e #9a987e #d0ceaa; font-size: 14px; }
.flat select { padding-left: 4px; }
.flat::after { border: 2px solid #aaa88c; }

/* spreadsheet */
.excel { position: absolute; left: 613px; top: 322px; right: 0; bottom: 0; overflow: hidden; display: flex; flex-direction: column; background: #dbe8f8; color: #15428b; border-left: 1px solid #c8daf2; }
.xtitle { height: 30px; flex: none; display: flex; align-items: flex-end; padding-bottom: 3px; background: #fff; position: relative; }
.qat { margin-left: 36px; width: 106px; height: 21px; display: flex; align-items: center; gap: 7px; padding-left: 17px; border: 1px solid #c4cad4; border-left: 0; border-radius: 0 11px 11px 0; }
.qat svg { display: block; }
.more { margin: 0 0 7px 8px; }
.xtitle h1 { position: absolute; left: 532px; top: 6px; margin: 0; font-size: 13px; line-height: 18px; font-weight: normal; color: #000; white-space: nowrap; }
.tabs { height: 27px; flex: none; display: flex; align-items: flex-end; padding-left: 44px; background: #bfdbff; border-bottom: 1px solid #8db2e3; }
.tabs button { height: 25px; padding: 0 9px 2px 10px; margin: 0 4px; border: 1px solid transparent; }
.tabs .active { background: linear-gradient(#fff, #dfeaf7); border-color: #8db2e3; border-bottom: 0; border-radius: 4px 4px 0 0; height: 26px; margin-bottom: -1px; }
.orb { position: absolute; left: 3px; top: 8px; width: 37px; height: 37px; border-radius: 50%; border: 1px solid #8492a8; background: radial-gradient(circle at 50% 80%, #fff, #cdd6e2 60%, #eef2f8 90%); display: grid; place-items: center; }
.ribbon { height: 108px; flex: none; display: flex; gap: 4px; padding: 2px 0 2px 3px; background: linear-gradient(#dbe6f4, #c7d9ee 20%, #d4e3f5); border-bottom: 2px solid #b9d6ee; }
.group { flex: none; display: flex; flex-direction: column; border: 1px solid #aac4e2; border-radius: 3px; background: linear-gradient(#dee8f5, #d2e0f1 18%, #c7d8ed 19%, #dbe7f6); overflow: hidden; }
.group footer { position: relative; height: 20px; line-height: 19px; text-align: center; padding-right: 18px; background: #c1d8f1; color: #3e6aaa; }
.group .center { padding-right: 0; }
.la { position: absolute; right: 4px; top: 4px; width: 8px; height: 8px; }
.gbody { flex: 1; min-height: 0; display: flex; padding: 3px; white-space: nowrap; }
.col, .gcol { display: flex; flex-direction: column; }
.g-clip { width: 111px; } .g-font { width: 233px; } .g-align { width: 228px; } .g-num { width: 135px; } .g-style { width: 164px; } .g-cell { width: 160px; }
.big { display: flex; flex-direction: column; align-items: center; line-height: 17px; padding: 1px 4px; }
.big svg { margin-bottom: 6px; flex: none; }
.big .dd { margin-top: 6px; }
.big span .dd { margin: 0 0 0 4px; vertical-align: 3px; }
.dd { display: inline-block; border: 3px solid transparent; border-top: 3px solid #567db0; border-bottom: 0; }
.stack { display: flex; flex-direction: column; }
.stack button { height: 22px; display: flex; align-items: center; gap: 3px; padding: 0 0 4px 4px; }
.g-clip .big { width: 40px; padding: 1px 0; }
.line { display: flex; gap: 4px; height: 35px; padding-top: 9px; align-items: flex-start; }
.col .line:first-child { gap: 0; }
.combo { position: relative; height: 25px; background: #eaf2fb; border: 1px solid #abc1de; color: #000; }
.combo select { appearance: none; width: 100%; height: 100%; padding-left: 2px; }
.combo::after { content: ""; position: absolute; right: 4px; top: 10px; border: 3px solid transparent; border-top-color: #567db0; border-bottom: 0; }
.fname { width: 131px; } .fsize { width: 47px; margin-left: -1px; } .wide { width: 128px; }
.m4 { margin-left: 4px; }
.bar { display: flex; height: 22px; border: 1px solid #9ebbdd; border-radius: 3px; background: linear-gradient(#dce8f6, #c8daef 50%, #dce9f8); overflow: hidden; }
.bar button { display: flex; align-items: center; justify-content: center; gap: 5px; border-right: 1px solid #bdd0e8; color: #222; }
.bar button:last-child { border-right: 0; }
.bar b { font: bold 14px "Liberation Serif", serif; }
.bar .t18 { font-size: 17px; }
.bar sup { font-size: 8px; margin: -8px 0 0 -4px; color: #3e6aaa; }
.w22 { width: 22px; } .w30 { width: 30px; } .w32 { width: 32px; } .w34 { width: 34px; }
.hot { background: linear-gradient(#fddc9a, #f7a84a 45%, #ffdf75); }
.wrapcol { border-left: 1px solid #b5cce6; margin: 9px 0 0 4px; padding-left: 5px; gap: 11px; height: 58px; }
.wrapcol button { height: 22px; display: flex; align-items: center; gap: 3px; }
.wrapcol .dd { margin-left: 3px; }
.fa { font: bold 14px "Liberation Serif", serif; fill: #24509a; }
.wen { font: bold 8px "Liberation Sans", sans-serif; }
.ab { font: 10px "Liberation Serif", serif; }
.dec { font: bold 8px "Liberation Sans", sans-serif; }
.g-style .big { width: 51px; padding: 1px 0; }
.g-style .wide1 { width: 56px; }
.g-style .gbody { padding: 3px 0; }
.g-cell .big { width: 42px; padding: 1px 0; }
.g-cell .gbody { padding-left: 2px; }
.fbar { height: 21px; flex: none; display: flex; border: 1px solid #7a9ccc; border-width: 1px 0; color: #000; }
.namebox { width: 151px; text-align: center; background: #c9e8cd; font: 13px "Liberation Mono", monospace; }
.nd { width: 19px; background: #fff; font-size: 8px; }
.fx { width: 77px; display: flex; justify-content: space-between; align-items: center; padding: 0 6px 0 5px; background: linear-gradient(#e8f0fa, #a8bfe0); border: 1px solid #7a9ccc; border-radius: 10px 0 0 10px; font: bold 15px "Liberation Serif", serif; color: #444; }
.fx i { width: 9px; height: 9px; border-radius: 50%; background: #c3cddc; }
.formula { flex: 1; background: #c9e8cd; }
.colheads { height: 16px; flex: none; display: flex; padding-top: 2px; border-bottom: 1px solid #9eb6ce; color: #111; }
.colheads span { width: 40px; flex: none; text-align: center; border: 1px solid #9eb6ce; border-width: 1px 1px 0 0; background: linear-gradient(#f6f9fc, #d8e1ee); font: 9px/13px "Liberation Mono", monospace; }
.colheads .corner { width: 23px; background: #a9c4e9; }
.colheads .sel, .rowheads .sel { background: #f7b860; }
.sheet { flex: 1; min-height: 0; display: flex; overflow: hidden; }
.rowheads { width: 23px; flex: none; border-right: 1px solid #9eb6ce; color: #111; }
.rowheads div { height: 10px; text-align: center; border-bottom: 1px solid #9eb6ce; background: #e4ecf7; font: 9px/10px "Liberation Mono", monospace; }
.cells { flex: 1; position: relative; overflow: hidden; background-color: #c9e8cd; background-image: linear-gradient(90deg, transparent 39px, #c4d6dc 39px), linear-gradient(transparent 9px, #c4d6dc 9px); background-size: 40px 10px; }
.picture { position: absolute; left: 0; top: 3px; background: #fff; }
.caption { position: absolute; left: 70px; top: 452px; width: 547px; height: 35px; margin: 0; line-height: 31px; background: #fff; color: #222; font-family: "Noto Sans CJK SC", sans-serif; font-weight: 300; font-size: 24px; white-space: nowrap; }
.caption span { font-family: "Liberation Mono", monospace; font-size: 20px; }
.pcbtext { font: bold 9px "Liberation Sans", sans-serif; fill: #111; }
.pcbtext.tiny { font-size: 7px; }
.dim { font: 12px "Liberation Mono", monospace; fill: #111; }
.dl { font-size: 20px; }
.dm { font-size: 14px; }
.it { font-style: italic; }
.notes { position: absolute; left: 0; top: 0; width: 100%; height: 100%; pointer-events: none; filter: drop-shadow(2px 3px 2px rgba(0, 0, 0, .5)); }
```

FILE: app.js
```js
// name | label colour | marker colour ; groups are separated in the layer list
const groups = [
  ['to|white|#0020ff', 'ts|green'], ['cs.etch'], ['cs|gold'], ['pln2t'], ['sig2t|gold'], ['pln3b'], ['sig3b|gold'], ['ss.etch'],
  ['ss|gold', 'bs|green', 'bo|white'], ['drl|grey|#449900'], ['2rdrou'], ['2rd|grey|#ff0000', 'rout|light'],
  ['tp', 'bp', 'gd1', 'gg1', 'gko', 'ydkdrl', 'v-cut||#ffff33', 'cslsh', 'sk', 'biaozhu', 'dwk', 'dwk1', 'dwkp', 'dwkby', 'auto_chk_pnl', 'ykskt', 'ykskb', 'ykt', 'ykb', 'd']
];
document.getElementById('layers').innerHTML = groups.map(g => '<div class="lgroup">' + g.map(r => {
  const [n, c, m] = r.split('|');
  return `<label class="layer"><input type="checkbox"${n === '2rd' ? ' checked' : ''}><i${m ? ` style="background:${m}"` : ''}></i><span class="c-${c || 'cyan'}">${n}${n === '2rd' ? '<small>⊞</small>' : ''}</span></label>`;
}).join('') + '</div>').join('');

document.getElementById('cols').innerHTML += [...'ABCDEFGHIJKLMNOPQRSTUVWX'].map((c, i) => `<span${i ? '' : ' class="sel"'}>${c}</span>`).join('');
document.getElementById('rows').innerHTML = Array.from({ length: 50 }, (_, i) => `<div${i ? '' : ' class="sel"'}>${i + 1}</div>`).join('');

const near = (x, y, list) => list.some(([a, b, r]) => Math.hypot(x - a, y - b) < r);
const inside = (x, y, list) => list.some(([l, t, r, b]) => x > l && x < r && y > t && y < b);

// via lattice of the board view
let s = '';
for (let j = 0; j < 35; j++) for (let i = j % 2; i < 24; i += 2) {
  const x = 308.5 + i * 19.3, y = 201 + j * 19.32;
  if (near(x, y, [[347, 229, 49], [530, 229, 38], [375, 367, 48], [375, 689, 45], [347, 826, 42], [530, 826, 38], [495, 399, 24], [495, 657, 24]])) continue;
  if (inside(x, y, [[335, 440, 412, 610], [565, 285, 800, 735], [565, 840, 800, 870], [300, 840, 375, 870]])) continue;
  s += `<path d="M${Math.round(x) - 1} ${Math.round(y) - 1}h2v2h-2z"/>`;
}
document.getElementById('vias').innerHTML = s;

// dots of the dimension drawing
s = '';
for (let j = 0; j < 35; j++) for (let i = j % 2; i < 51; i += 2) {
  const x = 792.5 + i * 8.6, y = 688 + j * 8.15;
  const holes = [809, 891, 1016, 1212].flatMap(a => [[a, 700, 18], [a, 952, 18]]);
  if (near(x, y, holes.concat([[822, 758, 15], [822, 894, 15], [875, 771, 11], [875, 880, 11]]))) continue;
  if (inside(x, y, [[804, 780, 842, 866], [905, 724, 1225, 788], [905, 788, 962, 850], [1080, 788, 1225, 850], [915, 850, 1225, 960]])) continue;
  s += `<circle cx="${x}" cy="${y}" r="1"/>`;
}
// scattered vias on the right half
for (const [x, y] of [[1104, 793], [1112, 802], [1095, 807], [1133, 790], [1133, 795], [1136, 813], [1141, 813], [1136, 818], [1141, 818], [1092, 824], [1118, 825], [1101, 832], [1127, 832], [1109, 824], [1168, 797], [1168, 808], [1165, 815], [1171, 815], [1164, 832], [1177, 793], [1192, 793], [1199, 793], [1212, 817], [1216, 817], [1226, 832], [1226, 841], [1183, 748], [1188, 748], [1183, 752], [1188, 752], [1226, 765], [1107, 889], [1102, 897], [1140, 873], [1143, 863], [1178, 854], [1178, 894], [1178, 899], [1190, 930], [1223, 930], [1172, 963], [1145, 962], [1094, 922], [1094, 940], [1094, 955], [1042, 903], [1060, 955], [1072, 962], [920, 857], [920, 861], [924, 857], [924, 861], [944, 857], [948, 857], [944, 861], [948, 861]])
  s += `<circle cx="${x}" cy="${y}" r="1"/>`;
document.getElementById('pads').innerHTML = s;

s = '';
for (const x of [809.5, 891, 1016, 1212.5]) for (const y of [700, 952])
  s += `<circle cx="${x}" cy="${y}" r="15.500" fill="#777"/><circle cx="${x}" cy="${y}" r="7.500" fill="#222"/>`;
document.getElementById('holes').innerHTML = s;

s = '';
for (const x of [1051.5, 1105.5, 1160.5])
  s += `<path d="M${x - 18} 665V652q18-7 37 0V665zM${x - 14} 665v11M${x + 14} 665v11M${x - 18} 676h37v21h-37zM${x - 14} 697v5h28v-5M${x - 11} 702v25h23v-25M${x - 9} 727v28h4v-28M${x + 6} 727v28h4v-28"/>`;
document.getElementById('leds').innerHTML = s;

const box = (x, y, w, h, f) => `<rect x="${x}" y="${y}" width="${w}" height="${h}" fill="${f}"${f === '#111' ? '' : ' stroke="#444"'}/>`;
s = '';
for (const y of [754, 770, 842, 854, 867, 879, 905]) s += box(1191.5, y + .5, 17, 7, '#aaa');
s += box(1190.5, 891.5, 19, 10, '#aaa') + box(1077.5, 901.5, 41, 56, 'none') + box(1044.5, 894.5, 9, 23, '#aaa') + box(1137.5, 892.5, 9, 22, '#aaa');
for (const x of [926, 950, 974, 1041, 1056, 1095, 1109, 1149, 1164]) s += box(x + .5, 864.5, 8, 17, '#aaa');
for (let i = 0; i < 8; i++) {
  const y = 889 + Math.round(i * 6.9);
  s += box(940.5, y + .5, 13, 4, '#aaa') + box(969.5, y + .5, 13, 4, '#aaa') + box(1065.5, y + 14.5, 11, 3, '#aaa') + box(1119.5, y + 14.5, 11, 3, '#aaa');
}
for (const [x, y] of [[937, 947], [967, 947], [937, 957], [967, 957]]) s += box(x + .5, y + .5, 18, 7, '#aaa');
for (const [x, y] of [[924, 889], [924, 896], [930, 911], [924, 924], [990, 890], [990, 903], [998, 903], [990, 923], [998, 923], [1024, 890], [1024, 903], [1024, 921], [1055, 905], [1049, 945], [1056, 945], [1138, 946]]) s += box(x + .5, y + .5, 5, 5, '#ccc');
for (const [x, y] of [[402, 345], [428, 345], [288, 356], [314, 356], [269, 418], [294, 418], [269, 438], [294, 438], [318, 398], [344, 398], [318, 415], [344, 415], [432, 460], [458, 460], [432, 480], [458, 480], [713, 440], [739, 440], [713, 462], [739, 462], [713, 482], [739, 482], [713, 500], [739, 500], [771, 435], [795, 435], [822, 435], [795, 459], [822, 459], [771, 459], [771, 478], [771, 505]])
  s += box(900 + Math.round(x / 3), 770 + Math.round(y / 3), 6, 6, '#111');
for (const x of [1045, 1099, 1152]) s += `<path d="M${x - 3} 853.5h6M${x} 851v6M${x + 13} 853.5h6" stroke="#111"/>`;
s += '<path d="M936 844.500h11M961 844.500h11M947 838l8 7M944 888.500h34M944 942.500h34" stroke="#444" fill="none"/><circle cx="956" cy="892" r="2" fill="none" stroke="#444"/><circle cx="1080.500" cy="905" r="2" fill="none" stroke="#444"/>';
document.getElementById('parts').innerHTML = s;
```
